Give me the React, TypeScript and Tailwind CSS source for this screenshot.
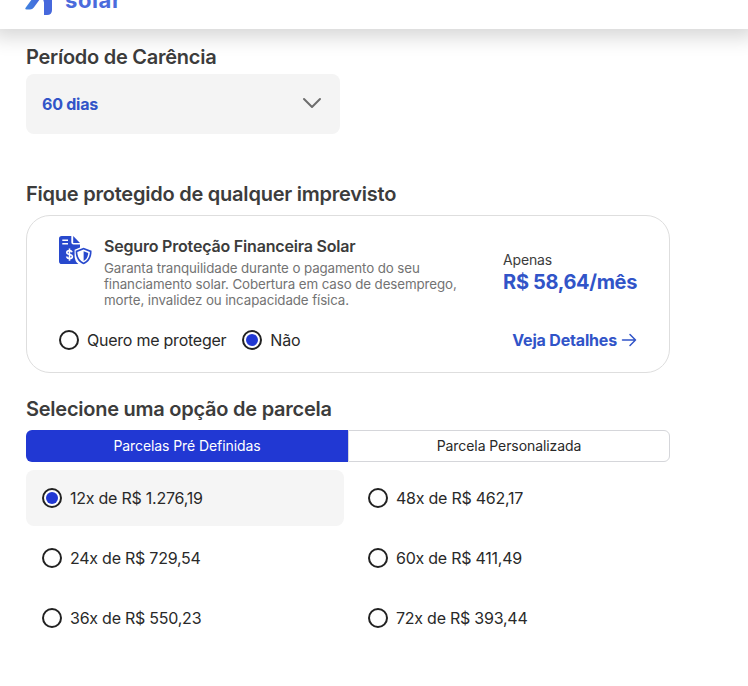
import React from "react";

function Radio({ label, checked = false }: { label: string; checked?: boolean }) {
  return (
    <label className="flex items-center gap-2 text-[16px] leading-5 tracking-[-0.24px] whitespace-nowrap text-[#292929]">
      <span className="flex size-5 shrink-0 items-center justify-center rounded-full border-2 border-[#222222] bg-white">
        {checked && <span className="size-3 rounded-full bg-[#2138d3]" />}
      </span>
      <span>{label}</span>
    </label>
  );
}

function InsuranceIcon() {
  return (
    <svg className="shrink-0" width="33" height="29" viewBox="0 0 33 29" fill="none">
      <path
        d="M2.8 0H12.3V6.2Q12.3 8.4 14.5 8.4H21V11.6L15.6 13.7V20Q15.6 25 19.4 28H2.8Q0 28 0 25.2V2.8Q0 0 2.8 0Z"
        fill="#2849cd"
      />
      <path d="M14.2 0L21 6.9H14.2Z" fill="#2849cd" />
      <path d="M3.3 4.2H9M3.3 7.8H9" stroke="white" strokeWidth="1.4" />
      <path
        d="M13.1 16.2C12.7 15.1 11.7 14.6 10.5 14.6C8.9 14.6 7.8 15.3 7.8 16.6C7.8 19.4 13.4 17.7 13.4 20.5C13.4 21.8 12.1 22.6 10.5 22.6C9 22.6 7.9 21.9 7.5 20.6M10.5 12.6V24.8"
        stroke="white"
        strokeWidth="1.6"
      />
      <path
        d="M24.6 11.8L32.6 14.8C32.6 21.3 30.4 25.8 24.6 28.3C18.8 25.8 16.6 21.3 16.6 14.8Z"
        fill="#2849cd"
      />
      <path d="M24.6 13.6L30.9 16C30.7 21 28.8 24.6 24.6 26.5C20.4 24.6 18.5 21 18.3 16Z" fill="white" />
      <path d="M24.6 15.3L29.2 16.9C29 20.8 27.6 23.4 24.6 25Z" fill="#2849cd" />
    </svg>
  );
}

const rows = [
  ["12x de R$ 1.276,19", "48x de R$ 462,17"],
  ["24x de R$ 729,54", "60x de R$ 411,49"],
  ["36x de R$ 550,23", "72x de R$ 393,44"],
];

export default function App() {
  return (
    <div className="h-[686px] w-[748px] overflow-hidden bg-white font-['Inter',sans-serif] text-[#3c3c3c]">
      <header className="h-[29px] bg-white shadow-[0_0_20px_8px_rgba(0,0,0,0.165)]">
        <div className="flex h-[29px] items-start overflow-hidden pl-[25px]">
          <svg className="shrink-0" width="28" height="16" viewBox="0 0 28 16">
            <defs>
              <linearGradient id="mark" x1="0" y1="0" x2="1" y2="0">
                <stop stopColor="#3f83df" />
                <stop offset="1" stopColor="#4668dc" />
              </linearGradient>
            </defs>
            <path d="M6.3 0H14.3L8.8 7.6Q7.4 9.5 5 9.5H1.6Q-0.6 9.5 0.8 7.4Z" fill="url(#mark)" />
            <path d="M18.3 0H27V10Q27 15 22 15H19V2.5Z" fill="#4668dc" />
          </svg>
          <span className="-mt-[14px] ml-[12px] text-[22px] leading-7 font-bold tracking-[0.6px] text-[#4b6bdc]">solar</span>
        </div>
      </header>

      <main className="w-[670px] pt-4 pl-[26px]">
        <h2 className="text-[20px] leading-6 font-semibold tracking-[-0.26px]">Período de Carência</h2>
        <button className="mt-[5px] flex h-[60px] w-[314px] items-center justify-between rounded-lg bg-[#f4f4f4] pr-[18px] pl-4 text-[16px] font-bold tracking-[-0.25px] text-[#3154c8]">
          <span>60 dias</span>
          <svg className="-mt-[2px]" width="20" height="12" viewBox="0 0 20 12" fill="none" stroke="#6d6d6d" strokeWidth="2" strokeLinecap="round" strokeLinejoin="round">
            <path d="M2 2L10 10L18 2" />
          </svg>
        </button>

        <h2 className="mt-12 text-[20px] leading-6 font-semibold tracking-[-0.23px]">Fique protegido de qualquer imprevisto</h2>
        <section className="mt-[9px] h-[158px] rounded-[24px] border border-[#dedede] px-8 pt-5">
          <div className="flex h-[94px] justify-between">
            <div className="flex">
              <InsuranceIcon />
              <div className="ml-3">
                <h3 className="text-[16px] leading-5 font-semibold tracking-[-0.19px]">Seguro Proteção Financeira Solar</h3>
                <p className="mt-1 text-[13.33px] leading-4 tracking-[-0.1px] whitespace-nowrap text-[#737373]">
                  Garanta tranquilidade durante o pagamento do seu
                  <br />
                  financiamento solar. Cobertura em caso de desemprego,
                  <br />
                  morte, invalidez ou incapacidade física.
                </p>
              </div>
            </div>
            <div className="pt-[14px] whitespace-nowrap">
              <p className="text-[14px] leading-5 tracking-[-0.2px]">Apenas</p>
              <p className="text-[20px] leading-6 font-bold tracking-[-0.35px] text-[#3154c8]">R$ 58,64/mês</p>
            </div>
          </div>
          <div className="flex items-center justify-between">
            <div className="flex gap-4">
              <Radio label="Quero me proteger" />
              <Radio label="Não" checked />
            </div>
            <a className="flex items-center gap-1 text-[16px] leading-5 font-bold tracking-[-0.18px] text-[#3154c8]">
              Veja Detalhes
              <svg width="16" height="16" viewBox="0 0 16 16" fill="none" stroke="currentColor" strokeWidth="1.5" strokeLinecap="round" strokeLinejoin="round">
                <path d="M1.5 8H14.5M9 2.5L14.5 8L9 13.5" />
              </svg>
            </a>
          </div>
        </section>

        <h2 className="mt-6 text-[20px] leading-6 font-semibold tracking-[-0.25px]">Selecione uma opção de parcela</h2>
        <div className="mt-[9px] flex h-8 text-[14px] leading-5 tracking-[-0.08px]">
          <button className="w-[322px] rounded-l-md bg-[#2138d3] pb-px text-white">Parcelas Pré Definidas</button>
          <button className="w-[322px] rounded-r-md border border-[#d5d6da] pb-px text-[#292929]">Parcela Personalizada</button>
        </div>
        <div className="mt-2 grid grid-cols-2 gap-x-2 gap-y-1">
          {rows.flat().map((label, i) => (
            <div key={label} className={`flex h-14 items-center rounded-lg px-4 ${i === 0 ? "bg-[#f5f5f5]" : ""}`}>
              <Radio label={label} checked={i === 0} />
            </div>
          ))}
        </div>
      </main>
    </div>
  );
}
